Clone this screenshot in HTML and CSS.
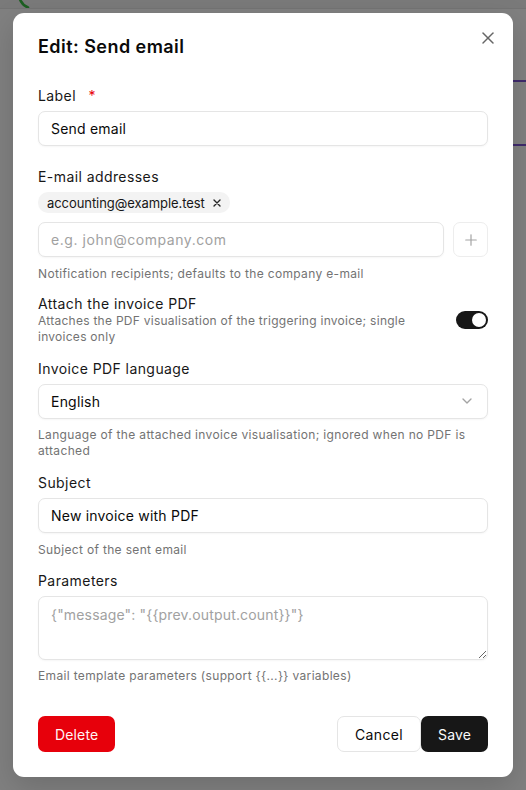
FILE: index.html
```html
<!DOCTYPE html>
<html lang="en">
<head>
<meta charset="utf-8">
<title>Edit: Send email</title>
<link rel="stylesheet" href="styles.css">
</head>
<body>
<div class="backdrop">
  <div class="app-header">
    <svg class="app-logo" width="40" height="10" viewBox="0 0 40 10"><path d="M19.5 -2 A 15 15 0 0 0 28 7.5" fill="none" stroke="#1d5f22" stroke-width="2.6" stroke-linecap="round"/></svg>
  </div>
  <div class="app-line app-line-1"></div>
  <div class="app-line app-line-2"></div>
</div>
<div class="overlay">
  <div class="modal" role="dialog">
    <div class="modal-head">
      <h2 class="modal-title">Edit: Send email</h2>
      <button class="close-btn" aria-label="Close">
        <svg width="20" height="20" viewBox="0 0 24 24" fill="none" stroke="currentColor" stroke-width="1.8" stroke-linecap="round"><path d="M18 6 6 18"/><path d="m6 6 12 12"/></svg>
      </button>
    </div>

    <div class="field field-nohint">
      <div class="label">Label <span class="req">*</span></div>
      <input class="input" type="text" value="Send email">
    </div>

    <div class="field">
      <div class="label">E-mail addresses</div>
      <div class="chips">
        <span class="chip">accounting@example.test
          <svg class="chip-x" width="8" height="8" viewBox="0 0 8 8" fill="none" stroke="currentColor" stroke-width="1.4" stroke-linecap="round"><path d="M1 1l6 6M7 1 1 7"/></svg>
        </span>
      </div>
      <div class="email-row">
        <input class="input input-email grow" type="text" placeholder="e.g. john@company.com">
        <button class="icon-btn" aria-label="Add">
          <svg width="18" height="18" viewBox="0 0 24 24" fill="none" stroke="currentColor" stroke-width="1.6" stroke-linecap="round"><path d="M5 12h14"/><path d="M12 5v14"/></svg>
        </button>
      </div>
      <div class="hint">Notification recipients; defaults to the company e-mail</div>
    </div>

    <div class="field toggle-field">
      <div class="toggle-text">
        <div class="toggle-title">Attach the invoice PDF</div>
        <div class="toggle-desc">Attaches the PDF visualisation of the triggering invoice; single invoices only</div>
      </div>
      <button class="switch" aria-pressed="true"><span class="knob"></span></button>
    </div>

    <div class="field field-language">
      <div class="label">Invoice PDF language</div>
      <div class="select">
        <span>English</span>
        <svg width="16" height="16" viewBox="0 0 24 24" fill="none" stroke="currentColor" stroke-width="2" stroke-linecap="round" stroke-linejoin="round"><path d="m6 9 6 6 6-6"/></svg>
      </div>
      <div class="hint">Language of the attached invoice visualisation; ignored when no PDF is attached</div>
    </div>

    <div class="field field-subject">
      <div class="label">Subject</div>
      <input class="input" type="text" value="New invoice with PDF">
      <div class="hint">Subject of the sent email</div>
    </div>

    <div class="field field-last">
      <div class="label">Parameters</div>
      <textarea class="textarea" placeholder='{"message": "{{prev.output.count}}"}'></textarea>
      <div class="hint">Email template parameters (support {{...}} variables)</div>
    </div>

    <div class="modal-foot">
      <button class="btn btn-danger">Delete</button>
      <div class="foot-right">
        <button class="btn btn-outline">Cancel</button>
        <button class="btn btn-primary">Save</button>
      </div>
    </div>
  </div>
</div>
</body>
</html>
```

FILE: styles.css
```css
* { box-sizing: border-box; }

html, body {
  margin: 0;
  padding: 0;
}

body {
  background: #808080;
  font-family: Inter, "Noto Sans", sans-serif;
  color: #0a0a0a;
  width: 526px;
  height: 790px;
  overflow: hidden;
  position: relative;
}

.backdrop {
  position: absolute;
  inset: 0;
}

.app-header {
  height: 9px;
  background: #7a7a7a;
  border-bottom: 1px solid #747474;
  overflow: hidden;
}

.app-logo {
  display: block;
}

.app-line {
  position: absolute;
  right: 0;
  width: 14px;
  height: 2px;
  background: #3f2a6c;
}
.app-line-1 { top: 80px; }
.app-line-2 { top: 144px; }

.overlay {
  position: relative;
  padding: 13px;
}

.modal {
  width: 500px;
  background: #fff;
  border-radius: 11px;
  padding: 20px 25px 25px;
  box-shadow: 0 10px 30px rgba(0,0,0,0.15);
}

.modal-head {
  display: flex;
  justify-content: space-between;
  align-items: flex-start;
  margin-bottom: 24.5px;
}

.modal-title {
  margin: 0;
  font-size: 18px;
  line-height: 28px;
  font-weight: 600;
  letter-spacing: 0.025em;
}

.close-btn {
  width: 20px;
  height: 20px;
  padding: 0;
  margin: -5px -10px 0 0;
  border: 0;
  background: none;
  color: #666;
  display: flex;
}

.field {
  display: flex;
  flex-direction: column;
  margin-bottom: 13px;
}
.field-nohint { margin-bottom: 21.6px; }
.field-language { margin-bottom: 13.8px; }
.field-subject { margin-bottom: 13.4px; }
.field-last { margin-bottom: 0; }

.label {
  font-size: 14px;
  line-height: 20px;
  margin-bottom: 5px;
  color: #171717;
  letter-spacing: 0.03em;
}

.req {
  color: #e7000b;
  margin-left: 8px;
}

.input, .select, .textarea {
  font-family: inherit;
  font-size: 14px;
  color: #0a0a0a;
  border: 1px solid #e5e5e5;
  border-radius: 7px;
  background: #fff;
  box-shadow: 0 1px 2px rgba(0,0,0,0.04);
  letter-spacing: 0.015em;
}

.input {
  height: 35px;
  padding: 0 12px;
  width: 100%;
  outline: none;
}

.input-email { letter-spacing: 0.04em; }

.input::placeholder, .textarea::placeholder {
  color: #a1a1a1;
}

.chips {
  display: flex;
  margin-bottom: 9.2px;
}

.chip {
  display: inline-flex;
  align-items: center;
  gap: 8.5px;
  height: 21px;
  padding: 0 9px 0 9px;
  background: #f3f3f3;
  border-radius: 10px;
  font-size: 13px;
  color: #171717;
  letter-spacing: -0.005em;
}

.chip-x { color: #262626; }

.email-row {
  display: flex;
  gap: 9px;
}
.grow { flex: 1; width: auto; }

.icon-btn {
  width: 35px;
  height: 35px;
  flex: none;
  border: 1px solid #ededed;
  border-radius: 7px;
  background: #fff;
  color: #a3a3a3;
  display: flex;
  align-items: center;
  justify-content: center;
  padding: 0;
}

.hint {
  margin-top: 8.5px;
  font-size: 12px;
  line-height: 16px;
  color: #737373;
  letter-spacing: 0.028em;
}

.toggle-field {
  flex-direction: row;
  align-items: center;
  gap: 12px;
  margin-top: 1.8px;
  margin-bottom: 14px;
}

.toggle-text { flex: 1; }

.toggle-title {
  font-size: 14px;
  line-height: 18px;
  color: #171717;
  letter-spacing: 0.03em;
}

.toggle-desc {
  font-size: 12px;
  line-height: 16px;
  color: #737373;
  letter-spacing: 0.022em;
}

.switch {
  width: 32px;
  height: 18px;
  flex: none;
  border: 0;
  border-radius: 9px;
  background: #171717;
  padding: 2px;
  display: flex;
  justify-content: flex-end;
  align-items: center;
}

.knob {
  width: 14px;
  height: 14px;
  border-radius: 50%;
  background: #fff;
}

.select {
  height: 35px;
  padding: 0 12px;
  display: flex;
  align-items: center;
  justify-content: space-between;
}
.select svg { color: #a3a3a3; margin-right: 0.5px; }

.textarea {
  display: block;
  width: 100%;
  height: 64px;
  padding: 8px 12px;
  line-height: 20px;
  resize: vertical;
  outline: none;
  letter-spacing: 0.012em;
}

.modal-foot {
  display: flex;
  justify-content: space-between;
  margin-top: 32px;
}

.foot-right {
  display: flex;
}

.btn {
  height: 36px;
  padding: 0 16px;
  border-radius: 7px;
  font-family: inherit;
  font-size: 14px;
  letter-spacing: 0.01em;
  border: 1px solid transparent;
}

.btn-danger {
  background: #e7000b;
  color: #fff5f5;
}

.btn-outline {
  background: #fff;
  border-color: #e5e5e5;
  color: #0a0a0a;
  padding: 0 17px;
  letter-spacing: 0.025em;
}

.btn-primary {
  background: #171717;
  color: #fafafa;
}
```
